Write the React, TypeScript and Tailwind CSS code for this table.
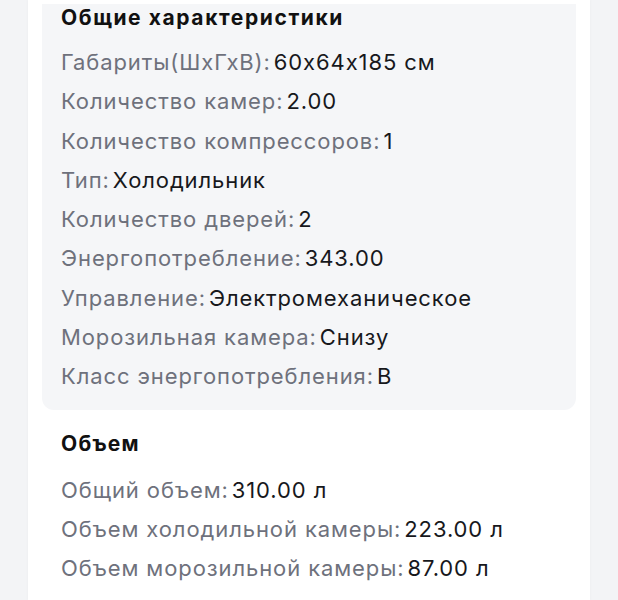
import React from 'react';

type Row = { label: string; value: string };

const general: Row[] = [
  { label: 'Габариты(ШхГхВ)', value: '60x64x185 см' },
  { label: 'Количество камер', value: '2.00' },
  { label: 'Количество компрессоров', value: '1' },
  { label: 'Тип', value: 'Холодильник' },
  { label: 'Количество дверей', value: '2' },
  { label: 'Энергопотребление', value: '343.00' },
  { label: 'Управление', value: 'Электромеханическое' },
  { label: 'Морозильная камера', value: 'Снизу' },
  { label: 'Класс энергопотребления', value: 'B' },
];

const volume: Row[] = [
  { label: 'Общий объем', value: '310.00 л' },
  { label: 'Объем холодильной камеры', value: '223.00 л' },
  { label: 'Объем морозильной камеры', value: '87.00 л' },
];

const SpecRow = ({ label, value }: Row) => (
  <div className="text-[22px] leading-[39.3px] tracking-[0.9px] whitespace-nowrap">
    <span className="text-[#6e717c]">{label}:</span>
    <span className="ml-[3px] text-[#17181c]">{value}</span>
  </div>
);

export default function App() {
  return (
    <div className="flex min-h-screen bg-[#f3f4f6] font-['Inter',sans-serif] [font-feature-settings:'calt'_0]">
      <div className="ml-[28px] w-[562px] bg-white pt-[4px] shadow-[0_0_3px_rgba(0,0,0,0.04)]">
        <section className="mx-[14px] rounded-b-xl bg-[#f5f6f8] px-[19px] pb-[13px]">
          <h3 className="text-[21px] leading-[28px] font-bold tracking-[1.6px] text-[#111]">Общие характеристики</h3>
          <div className="mt-[11px]">
            {general.map((r) => (
              <SpecRow key={r.label} {...r} />
            ))}
          </div>
        </section>
        <section className="px-[33px] pt-[20px]">
          <h3 className="text-[21px] leading-[28px] font-bold tracking-[1.2px] text-[#111]">Объем</h3>
          <div className="mt-[13px]">
            {volume.map((r) => (
              <SpecRow key={r.label} {...r} />
            ))}
          </div>
        </section>
      </div>
    </div>
  );
}
